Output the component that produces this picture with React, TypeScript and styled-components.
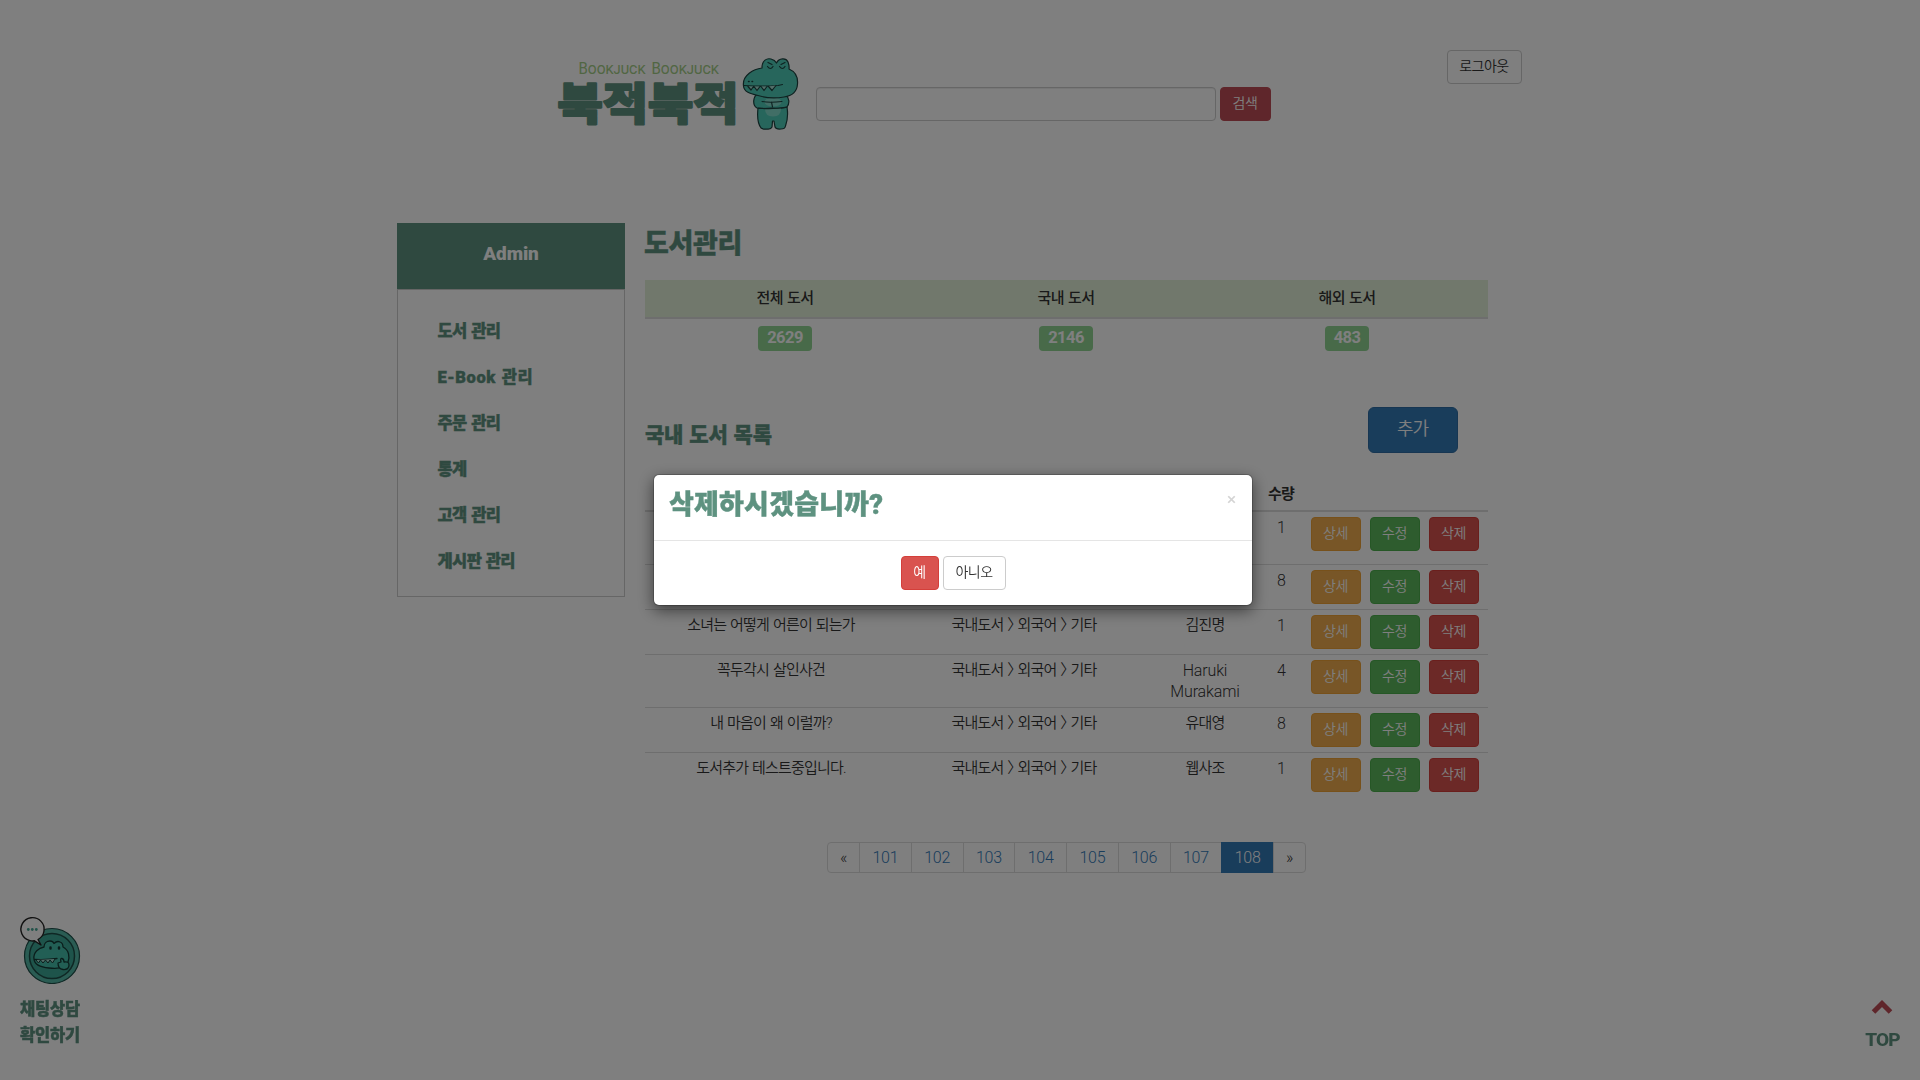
import React from 'react';
import styled, { createGlobalStyle, css } from 'styled-components';

const GREEN = '#5e9280';
const GOTHIC = `Roboto, 'Noto Sans CJK KR', 'Noto Sans', sans-serif`;

const GlobalStyle = createGlobalStyle`
  *, *::before, *::after { box-sizing: border-box; }
  html, body { margin: 0; padding: 0; background: #fff; overflow: hidden; }
  body {
    font-family: ${GOTHIC};
    font-size: 15px;
    font-weight: 350;
    line-height: 21px;
    letter-spacing: -0.8px;
    word-spacing: 1px;
    color: #333;
  }
  h1, h2, h3, ul, p { margin: 0; padding: 0; }
`;

const Page = styled.div`
  width: 1920px;
  height: 1080px;
  display: flex;
  flex-direction: column;
`;

const Header = styled.header`
  height: 223px;
  flex: none;
  display: flex;
  align-items: flex-start;
  padding-left: 550px;
`;

const Logo = styled.svg`
  width: 266px;
  height: 90px;
  margin-top: 50px;
  flex: none;
  letter-spacing: 0;
  word-spacing: 0;
`;

const SearchForm = styled.form`
  display: flex;
  gap: 4px;
  margin-top: 87px;
`;

const SearchInput = styled.input`
  width: 400px;
  height: 34px;
  border: 1px solid #ccc;
  border-radius: 4px;
  background: #fff;
  box-shadow: inset 0 1px 1px rgba(0, 0, 0, 0.075);
`;

type Tone = 'plain' | 'search' | 'warning' | 'success' | 'danger' | 'primary';

const tones: Record<Tone, [string, string, string]> = {
  plain: ['#fff', '#ccc', '#333'],
  search: ['#be4c56', '#be4c56', '#fff'],
  warning: ['#f0ad4e', '#eea236', '#fff'],
  success: ['#5cb85c', '#4cae4c', '#fff'],
  danger: ['#d9534f', '#d43f3a', '#fff'],
  primary: ['#337ab7', '#2e6da4', '#fff'],
};

const Button = styled.button<{ $tone: Tone; $width: number; $large?: boolean }>`
  flex: none;
  width: ${(p) => p.$width}px;
  height: 34px;
  padding: 0 1px 2px 0;
  border: 1px solid ${(p) => tones[p.$tone][1]};
  border-radius: 4px;
  background: ${(p) => tones[p.$tone][0]};
  color: ${(p) => tones[p.$tone][2]};
  font: 350 14px/20px ${GOTHIC};
  letter-spacing: -0.5px;
  ${(p) =>
    p.$large &&
    css`
      height: 46px;
      border-radius: 6px;
      font-size: 18px;
      line-height: 24px;
      letter-spacing: -1px;
    `}
`;

const LogoutSlot = styled.div`
  margin: 50px 0 0 176px;
`;

const Body = styled.main`
  display: grid;
  grid-template-columns: 228px 843px;
  column-gap: 20px;
  align-items: start;
  padding-left: 397px;
`;

const Sidebar = styled.nav`
  height: 374px;
  border: 1px solid #ccc;
  border-top: 0;
`;

const heading = css`
  color: ${GREEN};
  font-weight: 900;
  -webkit-text-stroke: 0.4px currentColor;
`;

const SidebarTitle = styled.h3`
  ${heading}
  height: 66px;
  margin: 0 -1px;
  padding-top: 19px;
  background: ${GREEN};
  color: #fff;
  text-align: center;
  font-size: 19px;
  line-height: 24px;
  letter-spacing: -0.1px;
  -webkit-text-stroke: 0;
`;

const Menu = styled.ul`
  border-top: 1px solid #ccc;
  padding: 19px 0 0 39.5px;
  list-style: none;
`;

const MenuItem = styled.li<{ $latin: boolean }>`
  ${heading}
  height: 46px;
  font-size: 16.5px;
  line-height: 46px;
  letter-spacing: ${(p) => (p.$latin ? 0.6 : -0.6)}px;
`;

const Content = styled.section`
  display: flex;
  flex-direction: column;
`;

const PageTitle = styled.h1`
  ${heading}
  height: 57px;
  padding-top: 2px;
  font-size: 27px;
  line-height: 38px;
  letter-spacing: -0.3px;
  text-indent: -1px;
`;

const Summary = styled.div`
  display: grid;
  grid-template-columns: repeat(3, 281px);
  text-align: center;
`;

const SummaryHead = styled.div`
  height: 39px;
  padding: 8px 1px 0 0;
  background: #e2f0d9;
  border-bottom: 2px solid #ddd;
  font-weight: 500;
  letter-spacing: -0.6px;
`;

const SummaryCell = styled.div`
  padding: 7px 1px 0 0;
  height: 88px;
`;

const Badge = styled.span`
  display: inline-block;
  height: 25px;
  padding: 0 9px;
  border-radius: 4px;
  background: #90d493;
  color: #fff;
  font-size: 16.5px;
  font-weight: 700;
  line-height: 24px;
  letter-spacing: -0.55px;
`;

const ListBar = styled.div`
  display: flex;
  justify-content: space-between;
  padding-right: 30px;
  height: 71px;
`;

const ListTitle = styled.h2`
  ${heading}
  padding-top: 14px;
  font-size: 21px;
  line-height: 28px;
  letter-spacing: -0.2px;
`;

const rowGrid = css`
  display: grid;
  grid-template-columns: 252px 254px 108px 44px 185px;
  text-align: center;
`;

const TableHead = styled.div`
  ${rowGrid}
  height: 34px;
  padding-top: 6px;
  border-bottom: 2px solid #ddd;
  font-weight: 600;
`;

const Row = styled.div<{ $tall?: boolean }>`
  ${rowGrid}
  height: ${(p) => (p.$tall ? 53 : 45)}px;
  padding-top: 5px;
  & + & {
    border-top: 1px solid #ddd;
  }
  &:nth-child(5) {
    height: 52px;
  }
`;

const Separator = styled.span`
  font-feature-settings: 'halt';
  margin-right: 3.5px;
`;

const Author = styled.div<{ $latin: boolean }>`
  padding: 0 12px;
  ${(p) =>
    p.$latin &&
    css`
      font-size: 16px;
      font-weight: 300;
      letter-spacing: -0.15px;
    `}
`;

const Quantity = styled.div`
  font-size: 16px;
  font-weight: 300;
`;

const Actions = styled.div`
  display: flex;
  gap: 9px;
  padding-left: 8px;
`;

const Pager = styled.ul`
  display: flex;
  align-self: center;
  margin-top: 45px;
  height: 31px;
  list-style: none;
`;

const PageLink = styled.li<{ $active?: boolean; $edge?: boolean }>`
  width: ${(p) => (p.$edge ? 33 : 52.75)}px;
  margin-right: -1px;
  border: 1px solid ${(p) => (p.$active ? '#337ab7' : '#ddd')};
  background: ${(p) => (p.$active ? '#337ab7' : '#fff')};
  color: ${(p) => (p.$active ? '#fff' : p.$edge ? '#333' : '#337ab7')};
  position: relative;
  text-align: center;
  font-size: 16px;
  font-weight: 300;
  line-height: 29px;
  letter-spacing: -0.3px;
  &:first-child { border-radius: 4px 0 0 4px; }
  &:last-child { border-radius: 0 4px 4px 0; margin-right: 0; }
`;

const ChatWidget = styled.aside`
  position: fixed;
  left: 14px;
  top: 912px;
  width: 72px;
  text-align: center;
  ${heading}
  font-size: 16.5px;
  line-height: 26px;
  letter-spacing: -0.2px;
`;

const ChatIcon = styled.svg`
  display: block;
  width: 72px;
  height: 72px;
  margin-bottom: 13px;
`;

const TopLink = styled.a`
  position: fixed;
  left: 1861px;
  top: 998px;
  width: 43px;
  display: flex;
  flex-direction: column;
  align-items: center;
  color: ${GREEN};
  font: 800 19px/26px ${GOTHIC};
  letter-spacing: -0.8px;
`;

const Chevron = styled.svg`
  width: 22px;
  height: 18px;
  margin: 0 1px 11px 0;
`;

const Backdrop = styled.div`
  position: fixed;
  inset: 0;
  background: rgba(0, 0, 0, 0.5);
`;

const Overlay = styled.div`
  position: fixed;
  inset: 0;
  display: flex;
  justify-content: center;
  align-items: flex-start;
  padding: 474px 14px 0 0;
`;

const Dialog = styled.div`
  width: 600px;
  height: 132px;
  border: 1px solid rgba(0, 0, 0, 0.2);
  border-radius: 6px;
  background: #fff;
  background-clip: padding-box;
  box-shadow: 0 5px 15px rgba(0, 0, 0, 0.5);
`;

const DialogHeader = styled.div`
  display: flex;
  justify-content: space-between;
  height: 66px;
  padding: 9px 16px 0 15px;
  border-bottom: 1px solid #e5e5e5;
`;

const DialogTitle = styled.h2`
  ${heading}
  padding-top: 2px;
  font-size: 27px;
  line-height: 38px;
  letter-spacing: 0.2px;
`;

const Close = styled.button`
  align-self: flex-start;
  margin-top: 6px;
  padding: 0;
  border: 0;
  background: none;
  color: #d4d4d4;
  font: 500 17px/18px ${GOTHIC};
`;

const DialogActions = styled.div`
  display: flex;
  justify-content: center;
  gap: 4px;
  padding: 15px 0 0 1px;
`;

const menu = ['도서 관리', 'E-Book 관리', '주문 관리', '통계', '고객 관리', '게시판 관리'];
const summary = [
  { label: '전체 도서', count: 2629 },
  { label: '국내 도서', count: 2146 },
  { label: '해외 도서', count: 483 },
];
const path = ['국내도서', '외국어', '기타'];
const books = [
  { title: '', path: [], author: '', quantity: 1, tall: true },
  { title: '', path: [], author: '', quantity: 8 },
  { title: '소녀는 어떻게 어른이 되는가', path, author: '김진명', quantity: 1 },
  { title: '꼭두각시 살인사건', path, author: 'Haruki Murakami', quantity: 4, tall: true },
  { title: '내 마음이 왜 이럴까?', path, author: '유대영', quantity: 8 },
  { title: '도서추가 테스트중입니다.', path, author: '웹사조', quantity: 1 },
];
const pages = [101, 102, 103, 104, 105, 106, 107, 108];

const Tagline = styled.text`
  font: 400 16.5px Roboto, sans-serif;
  font-variant: small-caps;
  fill: #a3cd86;
`;

function BrandLogo() {
  return (
    <Logo viewBox="550 50 266 90">
      <Tagline x="578.5" y="74" textLength="67" lengthAdjust="spacingAndGlyphs">Bookjuck</Tagline>
      <Tagline x="651.5" y="74" textLength="67.5" lengthAdjust="spacingAndGlyphs">Bookjuck</Tagline>
      <text
        x="557.5"
        y="119.5"
        fontFamily="Noto Sans CJK KR, sans-serif"
        fontWeight="900"
        fontSize="44"
        textLength="181"
        lengthAdjust="spacingAndGlyphs"
        fill={GREEN}
        stroke={GREEN}
        strokeWidth="2.2"
        strokeLinejoin="round"
      >
        북적북적
      </text>
      <g stroke="#1c4340" strokeWidth="1.2" strokeLinecap="round" strokeLinejoin="round" fill="#4fcdb9">
        <path d="M758 108 C757 117 758 124 761 128 Q763 129.500 767 129 Q771 129.500 772 127 L772.500 121 L774 121 L775 127 Q776 129.500 781 129 Q785 129 785.500 126 C788 119 788 113 787 107 Z" />
        <path d="M758 94 C753 96 752 105 757 108 Q762 109 772 108 Q783 109 787 107 C790 103 789 98 786 95 Z" />
        <ellipse cx="773" cy="102" rx="8.500" ry="4.500" fill="#83ddcd" stroke="none" />
        <path d="M765 108.500 H781 Q781 116.500 773 116.500 Q765 116.500 765 108.500Z" fill="#83ddcd" stroke="none" />
        <path d="M762 101.500 Q770 103 782 101.500 M771.500 102 L772.500 107 M758 108 Q772 109.500 787 107" fill="none" />
        <path d="M743.500 86 C742 75 754 69 762 68 C762 60 767 58 771 59 Q775 60 776.500 63 C779 58 786 57.500 788 62 Q789.500 66 789 69 C796 72 798 78 797.500 84 C797 92 791 96 784 97 C775 98.500 766 98 758 95.500 C750 93.500 744 92 743.500 86 Z" />
        <path d="M744 85.500 Q763 86.500 778 85.500 L782.500 84.500" fill="none" />
        <path d="M748 86.500 l3 3.500 2.500-3.500 M754 86.500 l3 4 3-4 M761 86.500 l3 4 3-4 M768.500 86.500 l3.500 4 4-5" fill="#a9dcd2" />
        <path d="M767.500 66.500 q3 4 5.500 0 M779.500 66.500 q3 4 5.500 0 M768 62.500 l4 2 M785 62.500 l-4 2" fill="none" />
        <path d="M748.500 81.500 h.6 M752 81.500 h.6" strokeWidth="1.500" />
      </g>
    </Logo>
  );
}

function ChatArt() {
  return (
    <ChatIcon viewBox="14 912 72 72">
      <circle cx="52" cy="956" r="27.500" fill="#55b8a7" stroke="#1e4f49" strokeWidth="1.200" />
      <circle cx="52" cy="956" r="22.500" fill="#3da996" stroke="#1e4f49" strokeWidth="1.500" />
      <g stroke="#153b37" strokeWidth="1.300" strokeLinecap="round" strokeLinejoin="round" fill="#45bfab">
        <path d="M34 959 C33 952 39 948 44 947 C44 943 47 941 50 941 Q53 941 54 943.500 Q57 940.500 60 942 Q63 943 63 947 C69 950 70 957 68 962 C66 968 58 969 49 968 C40 967 34.500 965 34 959 Z" />
        <path d="M34.500 959.500 Q48 960 57 958.500" fill="none" />
        <path d="M36 960 l2.500 3 2-3 2.500 3 2.500-3 2.500 3 2-3 2.500 3 2.500-4" fill="#a9dcd2" strokeWidth="1" />
        <path d="M50.500 947.500 v1 M59 947.500 v1" strokeWidth="2.500" />
        <path d="M58 963 L61 962 Q60 958 62 958.500 Q64 959 64 962 Q69 961 69 965 Q69 970 63 969.500 Q58 969 58 963Z" />
      </g>
      <path
        d="M30 940.600 A11.600 11.600 0 1 1 38 939.500 L41 945 L34.500 940.800 Q32 941.200 30 940.600Z"
        fill="#fff"
        stroke="#222"
        strokeWidth="1.400"
        strokeLinejoin="round"
      />
      <g fill="#48a594">
        <circle cx="28.300" cy="929.500" r="1.400" />
        <circle cx="32.300" cy="929.500" r="1.400" />
        <circle cx="36.300" cy="929.500" r="1.400" />
      </g>
    </ChatIcon>
  );
}

function Category({ parts }: { parts: string[] }) {
  return (
    <div>
      {parts.map((part, i) => (
        <React.Fragment key={part}>
          {i > 0 && <Separator> 〉</Separator>}
          {part}
        </React.Fragment>
      ))}
    </div>
  );
}

export default function App() {
  return (
    <>
      <GlobalStyle />
      <Page>
        <Header>
          <BrandLogo />
          <SearchForm>
            <SearchInput aria-label="검색" />
            <Button type="button" $tone="search" $width={51}>검색</Button>
          </SearchForm>
          <LogoutSlot>
            <Button $tone="plain" $width={75}>로그아웃</Button>
          </LogoutSlot>
        </Header>
        <Body>
          <Sidebar>
            <SidebarTitle>Admin</SidebarTitle>
            <Menu>
              {menu.map((item) => (
                <MenuItem key={item} $latin={/[A-Za-z]/.test(item)}>{item}</MenuItem>
              ))}
            </Menu>
          </Sidebar>
          <Content>
            <PageTitle>도서관리</PageTitle>
            <Summary>
              {summary.map((s) => (
                <SummaryHead key={s.label}>{s.label}</SummaryHead>
              ))}
              {summary.map((s) => (
                <SummaryCell key={s.label}>
                  <Badge>{s.count}</Badge>
                </SummaryCell>
              ))}
            </Summary>
            <ListBar>
              <ListTitle>국내 도서 목록</ListTitle>
              <Button $tone="primary" $width={90} $large>추가</Button>
            </ListBar>
            <TableHead>
              <div />
              <div />
              <div />
              <div>수량</div>
              <div />
            </TableHead>
            {books.map((b, i) => (
              <Row key={i} $tall={b.tall}>
                <div>{b.title}</div>
                <Category parts={b.path} />
                <Author $latin={/^[A-Za-z ]+$/.test(b.author)}>{b.author}</Author>
                <Quantity>{b.quantity}</Quantity>
                <Actions>
                  <Button $tone="warning" $width={50}>상세</Button>
                  <Button $tone="success" $width={50}>수정</Button>
                  <Button $tone="danger" $width={50}>삭제</Button>
                </Actions>
              </Row>
            ))}
            <Pager>
              <PageLink $edge>«</PageLink>
              {pages.map((n) => (
                <PageLink key={n} $active={n === 108}>{n}</PageLink>
              ))}
              <PageLink $edge>»</PageLink>
            </Pager>
          </Content>
        </Body>
      </Page>
      <ChatWidget>
        <ChatArt />
        <div>채팅상담</div>
        <div>확인하기</div>
      </ChatWidget>
      <TopLink>
        <Chevron viewBox="0 0 22 18">
          <path d="M2.500 14 L11 5.500 L19.500 14" fill="none" stroke="#be4c56" strokeWidth="5" />
        </Chevron>
        TOP
      </TopLink>
      <Backdrop />
      <Overlay>
        <Dialog role="dialog">
          <DialogHeader>
            <DialogTitle>삭제하시겠습니까?</DialogTitle>
            <Close>×</Close>
          </DialogHeader>
          <DialogActions>
            <Button $tone="danger" $width={38}>예</Button>
            <Button $tone="plain" $width={63}>아니오</Button>
          </DialogActions>
        </Dialog>
      </Overlay>
    </>
  );
}
